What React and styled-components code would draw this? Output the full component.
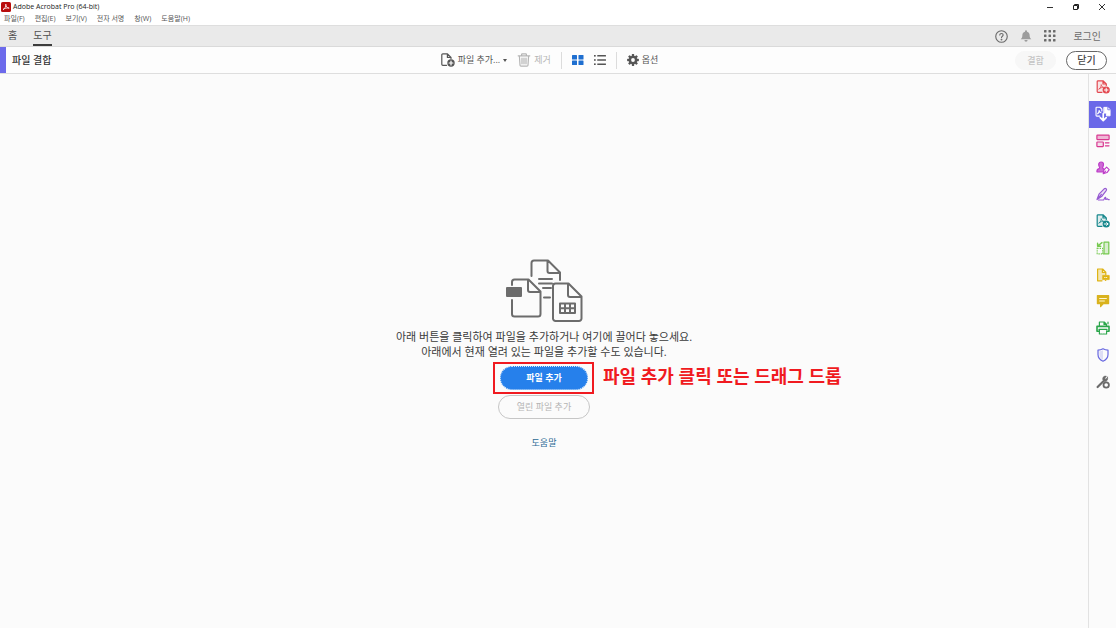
import styled, { createGlobalStyle } from "styled-components"

const GlobalStyle = createGlobalStyle`
  * {
    box-sizing: border-box;
  }
  body {
    margin: 0;
    background-color: #fbfbfb;
    color: #4b4b4b;
    font-family: "Open Sans", "Noto Sans CJK KR", sans-serif;
  }
  button {
    margin: 0;
    padding: 0;
    border: none;
    background: none;
    color: inherit;
    font-family: inherit;
    cursor: pointer;
  }
  svg {
    display: block;
    flex-shrink: 0;
  }
`

const Window = styled.div`
  display: flex;
  flex-direction: column;
  min-height: 100vh;
`

const TitleBar = styled.header`
  display: flex;
  justify-content: space-between;
  align-items: center;
  height: 13px;
  padding: 0 10px 0 1px;
  background-color: white;
`

const AppTitle = styled.div`
  display: flex;
  align-items: center;
  gap: 2px;
  font-size: 7px;
  line-height: 12px;
  color: #222;
`

const WindowControls = styled.div`
  display: flex;
  gap: 18px;
`

const MenuBar = styled.nav`
  display: flex;
  gap: 10px;
  height: 12px;
  padding-left: 4px;
  background-color: white;
`

const MenuItem = styled.button`
  font-size: 7px;
  line-height: 12px;
  color: #555;
  white-space: nowrap;
`

const TabBar = styled.div`
  display: flex;
  justify-content: space-between;
  height: 22px;
  padding: 0 15px 0 8px;
  background-color: #eaeaea;
  border-top: 1px solid #dedede;
  border-bottom: 1px solid #dadada;
`

const Tabs = styled.div`
  display: flex;
  gap: 16px;
`

const Tab = styled.button`
  height: 20px;
  font-size: 10px;
  line-height: 18px;
  color: #505050;
  border-bottom: 2px solid ${props => (props.$active ? "#3c3c3c" : "transparent")};
`

const AccountTools = styled.div`
  display: flex;
  align-items: center;
  gap: 12px;
  color: #6a6a6a;
`

const LoginButton = styled.button`
  margin-left: 5px;
  font-size: 10px;
  line-height: 20px;
`

const Toolbar = styled.div`
  display: grid;
  grid-template-columns: 1fr auto 1fr;
  align-items: center;
  height: 27px;
  padding-right: 9px;
  background-color: #fdfdfd;
  border-bottom: 1px solid #dedede;
`

const ToolName = styled.h1`
  margin: 0;
  padding-left: 6px;
  border-left: 6px solid #6c6aeb;
  font-size: 10px;
  line-height: 26px;
  font-weight: 500;
  color: #333;
`

const ToolGroup = styled.div`
  display: flex;
  align-items: center;
  gap: 10px;
  padding-right: 8px;
`

const ToolButton = styled.button`
  display: flex;
  align-items: center;
  gap: 3px;
  font-size: 9px;
  line-height: 16px;
  color: ${props => (props.$blue ? "#1f6fd0" : "#555")};
  white-space: nowrap;
  &:disabled {
    color: #b5b5b5;
  }
`

const Divider = styled.span`
  width: 1px;
  height: 17px;
  background-color: #dcdcdc;
`

const Actions = styled.div`
  display: flex;
  justify-content: flex-end;
  align-items: center;
  gap: 10px;
`

const PillButton = styled.button`
  width: 41px;
  height: 19px;
  border: 1px solid #666;
  border-radius: 10px;
  background-color: white;
  font-size: 10px;
  line-height: 17px;
  font-weight: 500;
  color: #444;
  &:disabled {
    border-color: #f7f7f7;
    background-color: #f7f7f7;
    color: #c4c4c4;
    font-size: 9px;
  }
`

const Body = styled.div`
  display: flex;
  flex: 1;
`

const DropArea = styled.main`
  display: flex;
  flex: 1;
  flex-direction: column;
  justify-content: center;
  align-items: center;
  padding-top: 7px;
`

const Message = styled.p`
  margin: 6px 0 7px;
  font-size: 11px;
  line-height: 15px;
  text-align: center;
  color: #3a3a3a;
`

const HighlightedAction = styled.div`
  position: relative;
  margin-bottom: 5px;
`

const AddButton = styled.button`
  display: block;
  width: 88px;
  height: 24px;
  border: 1px dotted #d4e6fb;
  border-radius: 12px;
  background-color: #2680eb;
  font-size: 9px;
  line-height: 22px;
  font-weight: 700;
  color: white;
`

const HighlightFrame = styled.span`
  position: absolute;
  inset: -4px -6px -4px -7px;
  border: 2px solid #f01a20;
  pointer-events: none;
`

const Annotation = styled.span`
  position: absolute;
  left: 103px;
  top: -2px;
  font-size: 18px;
  line-height: 24px;
  font-weight: 700;
  color: #f01a20;
  white-space: nowrap;
`

const OpenFilesButton = styled.button`
  width: 92px;
  height: 24px;
  border: 1px solid #c6c6c6;
  border-radius: 12px;
  font-size: 9px;
  line-height: 22px;
  color: #b4b4b4;
`

const HelpLink = styled.a`
  margin-top: 17px;
  font-size: 9px;
  line-height: 14px;
  color: #2c6a94;
  text-decoration: none;
`

const SidePanel = styled.aside`
  width: 28px;
  border-left: 1px solid #e2e2e2;
`

const ToolList = styled.div`
  display: flex;
  flex-direction: column;
  height: 321px;
`

const SideTool = styled.button`
  display: flex;
  flex: 1;
  justify-content: center;
  align-items: center;
  color: ${props => props.$color};
  background-color: ${props => (props.$active ? "#6a68e8" : "transparent")};
`

const Icon = ({ size = 14, children }) => (
  <svg
    width={size}
    height={size}
    viewBox="0 0 14 14"
    fill="none"
    stroke="currentColor"
    strokeWidth="1.2"
    strokeLinejoin="round"
    strokeLinecap="round"
    aria-hidden="true"
  >
    {children}
  </svg>
)

const AcrobatLogo = () => (
  <svg width="10" height="10" viewBox="0 0 10 10" aria-hidden="true">
    <rect width="10" height="10" rx="1.6" fill="#b90d0d" />
    <path
      d="M2 7.6C3.6 7 5.1 4.5 4.8 2.2C5 4.4 6 6 8.2 6.1C6 5.7 3.5 6.2 2 7.6Z"
      fill="none"
      stroke="white"
      strokeWidth="0.8"
      strokeLinejoin="round"
    />
  </svg>
)

const AddFileIcon = () => (
  <Icon>
    <path d="M5.6 12.3H1.8a1 1 0 0 1-1-1V1.8a1 1 0 0 1 1-1H6.5L10 4.3V5.6M6.4 1V4.4H9.8" />
    <circle cx="10" cy="10" r="3.7" fill="currentColor" stroke="none" />
    <path d="M10 8.1V11.9M8.1 10H11.9" stroke="white" />
  </Icon>
)

const TrashIcon = () => (
  <Icon>
    <path d="M1.2 2.8H12.8M4.6 2.6V1.4a.6.6 0 0 1 .6-.6H8.8a.6.6 0 0 1 .6.6V2.6M2.4 3L3 12.2a1 1 0 0 0 1 .9H10a1 1 0 0 0 1-.9L11.6 3M5 5.2V10.8M7 5.2V10.8M9 5.2V10.8" />
  </Icon>
)

const GridIcon = () => (
  <svg width="12" height="12" viewBox="0 0 12 12" fill="currentColor" aria-hidden="true">
    {[[0, 1], [6.5, 1], [0, 6.5], [6.5, 6.5]].map(([x, y]) => (
      <rect key={`${x}-${y}`} x={x} y={y} width="5" height="4.6" rx="0.5" />
    ))}
  </svg>
)

const ListIcon = () => (
  <svg width="12" height="12" viewBox="0 0 12 12" fill="currentColor" aria-hidden="true">
    {[1, 5.2, 9.4].map(y => (
      <g key={y}>
        <rect y={y} width="1.7" height="1.6" />
        <rect x="3.2" y={y} width="8.8" height="1.6" rx="0.4" />
      </g>
    ))}
  </svg>
)

const GearIcon = () => (
  <svg width="12" height="12" viewBox="0 0 12 12" aria-hidden="true">
    <g fill="currentColor">
      {[0, 45, 90, 135].map(angle => (
        <rect key={angle} x="4.8" y="0.1" width="2.4" height="11.8" rx="0.6" transform={`rotate(${angle} 6 6)`} />
      ))}
      <circle cx="6" cy="6" r="4.3" />
    </g>
    <circle cx="6" cy="6" r="1.9" fill="#fdfdfd" />
  </svg>
)

const HelpIcon = () => (
  <Icon size={13}>
    <circle cx="7" cy="7" r="6.2" />
    <path d="M5.1 5.4C5.2 3.3 8.8 3.3 8.8 5.4C8.8 6.7 7 6.7 7 8.2" />
    <circle cx="7" cy="10.3" r="0.4" fill="currentColor" />
  </Icon>
)

const BellIcon = () => (
  <svg width="12" height="12" viewBox="0 0 12 12" fill="#9c9c9c" aria-hidden="true">
    <path d="M6 0.3a1 1 0 0 1 1 1V1.7C8.8 2.1 9.6 3.4 9.6 5C9.6 7.4 10.4 8.2 11.3 9.3H0.7C1.6 8.2 2.4 7.4 2.4 5C2.4 3.4 3.2 2.1 5 1.7V1.3a1 1 0 0 1 1-1ZM4.4 10.1H7.6a1.6 1.6 0 0 1-3.2 0Z" />
  </svg>
)

const AppsIcon = () => (
  <svg width="12" height="12" viewBox="0 0 12 12" fill="currentColor" aria-hidden="true">
    {[0, 4.5, 9].map(y => [0, 4.5, 9].map(x => (
      <rect key={`${x}-${y}`} x={x} y={y} width="2.5" height="2.5" rx="0.5" />
    )))}
  </svg>
)

const PdfBadgeIcon = ({ arrow }) => (
  <Icon>
    <path
      d="M6 12.3H2a.8.8 0 0 1-.8-.8V1.6a.8.8 0 0 1 .8-.8H7L10.3 4V5.4M7 1V4H10"
      fill="currentColor"
      fillOpacity="0.12"
    />
    <path d="M3 9C4.6 8 5.4 6.2 5.2 4.6C5.5 6.4 6.4 7.2 7.8 7.4C6 7.3 4.4 7.8 3 9Z" strokeWidth="0.8" />
    <circle cx="10.2" cy="10" r="3.6" fill="currentColor" stroke="none" />
    <path d={arrow ? "M8.3 10H12M10.6 8.6L12 10L10.6 11.4" : "M10.2 8.2V11.8M8.4 10H12"} stroke="white" strokeWidth="1" />
  </Icon>
)

const CombineIcon = () => (
  <Icon size={16}>
    <path d="M4.2 8.8H1.5a.6.6 0 0 1-.6-.6V1.7a.6.6 0 0 1 .6-.6H4.4L6 2.8V4.4M2.3 6.8C3.2 6.1 3.7 5 3.6 3.9C3.8 5 4.2 5.6 5.2 5.9" strokeWidth="1" />
    <path d="M8 1.2H11.2L13.2 3.2V8.6H10V6.2H8Z" fill="currentColor" strokeWidth="0.8" />
    <path d="M11.2 1.2V3.3H13.2" stroke="#6a68e8" strokeWidth="0.7" />
    <path d="M7.2 6.6V12.4M4.6 10.2L7.2 12.8L9.8 10.2" strokeWidth="1.5" />
  </Icon>
)

const OrganizeIcon = () => (
  <Icon>
    <rect x="0.9" y="1.2" width="12.2" height="4.4" rx="0.5" fill="currentColor" fillOpacity="0.35" />
    <rect x="0.9" y="8" width="6.4" height="4.6" rx="0.5" fill="currentColor" fillOpacity="0.15" />
    <path d="M9.4 8.8H13M9.4 11.8H13" />
  </Icon>
)

const RequestSignIcon = () => (
  <Icon>
    <path
      d="M5 1C7 1 7.7 2.4 7.4 4.2C7.2 5.6 6.5 6 6.6 7C6.8 7.6 8 7.9 8.4 8.4L7 11H1C0.6 8.8 1.4 8 3 7.6C4 7.2 3.7 6.4 3.1 5.3C2.3 3.4 2.7 1 5 1Z"
      fill="currentColor"
      fillOpacity="0.75"
    />
    <path d="M7.2 12.8L8 8.8L10.6 6.2L13.2 8.6L11 11.6ZM7.4 12.6L9.8 10" fill="white" strokeWidth="1.1" />
  </Icon>
)

const SignIcon = () => (
  <Icon>
    <path d="M1 12.5L3 7.2L8.2 1.8C9.6 0.6 11.2 2.2 10.2 3.6L5.6 9.6L1 12.5ZM1.2 12.3L5.4 7.4" fill="currentColor" fillOpacity="0.15" />
    <path d="M2.5 13H7.6C8.4 12 8.8 10 9.6 10.4C10.2 10.8 9 12.8 10.2 12.4C11 12 11.2 11.6 11.6 12C11.8 12.6 12.4 12.8 13.2 12.6" />
  </Icon>
)

const ScanIcon = () => (
  <Icon>
    <path d="M8 1.2H12.8V12.8H8Z" fill="currentColor" fillOpacity="0.25" />
    <path d="M1.2 6.8V12.8H8" strokeDasharray="1.4 1" strokeLinecap="butt" />
    <path d="M1.2 7.4H6.6V12.8" strokeDasharray="1.4 1" strokeLinecap="butt" />
    <path d="M6 1.6L2 4.8M1.6 2.2V5.2H4.8" strokeWidth="1.4" />
  </Icon>
)

const FileCommentIcon = () => (
  <Icon>
    <path d="M6 12.8H1.6V1H6.6L9.8 4.2V7M6.4 1.2V4.4H9.6" fill="currentColor" fillOpacity="0.3" />
    <path d="M7 7.4H13.2V11.6H10.6L9.4 13V11.6H7Z" fill="currentColor" strokeWidth="0.8" />
    <path d="M8.6 9.5H11.8" stroke="white" strokeWidth="0.8" strokeDasharray="0.5 1.2" />
  </Icon>
)

const CommentIcon = () => (
  <Icon>
    <path d="M1.4 1.6H12.6V9.6H7.4L4.6 12.6V9.6H1.4Z" fill="currentColor" />
    <path d="M3.6 4.5H10.4M3.6 7H8.4" stroke="#fff7cf" strokeWidth="1" />
  </Icon>
)

const PrintIcon = () => (
  <Icon>
    <path d="M3.4 5V1H8.2L10.4 3.2V5M8 1.2V3.4H10.2" />
    <path d="M3 10.2H1V5.4H13V10.2H11" strokeWidth="1.6" />
    <path d="M3 8.4H11" />
    <path d="M3.4 8.8V13H10.6V8.8M12 1.2V2.8" strokeDasharray="1.6 1" />
  </Icon>
)

const ShieldIcon = () => (
  <Icon>
    <path d="M7 0.8C8.8 1.8 10.4 2.1 12 2.1V6.5C12 9.8 9.8 12 7 13.2C4.2 12 2 9.8 2 6.5V2.1C3.6 2.1 5.2 1.8 7 0.8Z" />
    <path d="M7 2.2C5.8 3 4.6 3.2 3.4 3.3V6.5C3.4 9 5 10.8 7 11.8Z" fill="currentColor" fillOpacity="0.2" stroke="none" />
  </Icon>
)

const WrenchIcon = () => (
  <Icon>
    <path d="M1.6 12L7.4 6.2" strokeWidth="2.2" />
    <path d="M11.6 2.2L9.8 4.2L8.8 3.2L10.4 1.2C8 0.6 6.2 2.4 6.8 4.8L8.6 6.6C10.8 6.8 12.2 4.6 11.6 2.2Z" fill="currentColor" strokeWidth="0.6" />
    <circle cx="10.2" cy="10" r="2.7" fill="white" strokeWidth="1.8" />
  </Icon>
)

const DocumentsArt = () => (
  <svg
    width="77"
    height="64"
    viewBox="0 0 77 64"
    fill="none"
    stroke="#6c6c6c"
    strokeWidth="2"
    strokeLinejoin="round"
    strokeLinecap="round"
    aria-hidden="true"
  >
    <path d="M25.5 17V4a2.5 2.5 0 0 1 2.5-2.5H42L54 13.5V21M41.5 2V12a2 2 0 0 0 2 2H53.5" />
    <path d="M33 20H46M33 24.5H46M37 29H45M38 38.5H44" />
    <path d="M6 26V23a2.5 2.5 0 0 1 2.5-2.5H22.5L34.5 32.5V55a2.5 2.5 0 0 1-2.5 2.5H8.5a2.5 2.5 0 0 1-2.5-2.5V41M22 21V31a2 2 0 0 0 2 2H34" />
    <rect x="1" y="29" width="14" height="8" fill="#6c6c6c" />
    <path d="M47 27a2.5 2.5 0 0 1 2.5-2.5H62.5L75.5 37.5V59.5a2.5 2.5 0 0 1-2.5 2.5H49.5a2.5 2.5 0 0 1-2.5-2.5ZM62 25V36a2 2 0 0 0 2 2H75" />
    <path d="M54 44.5H69V54H54ZM54 49.2H69M59 44.5V54M64 44.5V54" />
  </svg>
)

const menus = ["파일(F)", "편집(E)", "보기(V)", "전자 서명", "창(W)", "도움말(H)"]

const sideTools = [
  { label: "PDF 만들기", color: "#e34850", icon: <PdfBadgeIcon /> },
  { label: "파일 결합", color: "#ffffff", icon: <CombineIcon />, active: true },
  { label: "페이지 구성", color: "#d8368f", icon: <OrganizeIcon /> },
  { label: "서명 요청", color: "#bd3cc8", icon: <RequestSignIcon /> },
  { label: "작성 및 서명", color: "#965ad2", icon: <SignIcon /> },
  { label: "PDF 내보내기", color: "#16878c", icon: <PdfBadgeIcon arrow /> },
  { label: "스캔 및 OCR", color: "#75c94e", icon: <ScanIcon /> },
  { label: "주석용으로 보내기", color: "#dfb414", icon: <FileCommentIcon /> },
  { label: "주석", color: "#d9b21d", icon: <CommentIcon /> },
  { label: "인쇄물 제작", color: "#2ba64b", icon: <PrintIcon /> },
  { label: "보호", color: "#6767e0", icon: <ShieldIcon /> },
  { label: "도구 더 보기", color: "#6b6b6b", icon: <WrenchIcon /> },
]

const App = () => {
  return (
    <Window lang="ko">
      <GlobalStyle />
      <TitleBar>
        <AppTitle>
          <AcrobatLogo />
          Adobe Acrobat Pro (64-bit)
        </AppTitle>
        <WindowControls>
          <button aria-label="최소화">
            <svg width="8" height="8" viewBox="0 0 8 8" stroke="#333">
              <path d="M1 4.5H7" />
            </svg>
          </button>
          <button aria-label="이전 크기로">
            <svg width="8" height="8" viewBox="0 0 8 8" fill="none" stroke="#222">
              <path d="M1.5 2.5H5.5V6.5H1.5ZM2.5 2.5V1.5H6.5V5.5H5.5" />
            </svg>
          </button>
          <button aria-label="닫기">
            <svg width="8" height="8" viewBox="0 0 8 8" stroke="#333">
              <path d="M1 1L7 7M7 1L1 7" />
            </svg>
          </button>
        </WindowControls>
      </TitleBar>
      <MenuBar>
        {menus.map(menu => (
          <MenuItem key={menu}>{menu}</MenuItem>
        ))}
      </MenuBar>
      <TabBar>
        <Tabs>
          <Tab>홈</Tab>
          <Tab $active>도구</Tab>
        </Tabs>
        <AccountTools>
          <button aria-label="도움말"><HelpIcon /></button>
          <button aria-label="알림"><BellIcon /></button>
          <button aria-label="앱"><AppsIcon /></button>
          <LoginButton>로그인</LoginButton>
        </AccountTools>
      </TabBar>
      <Toolbar>
        <ToolName>파일 결합</ToolName>
        <ToolGroup>
          <ToolButton>
            <AddFileIcon />
            파일 추가...
            <svg width="4" height="3" viewBox="0 0 4 3" fill="currentColor">
              <path d="M0 0H4L2 3Z" />
            </svg>
          </ToolButton>
          <ToolButton disabled>
            <TrashIcon />
            제거
          </ToolButton>
          <Divider />
          <ToolButton $blue aria-label="축소판 보기"><GridIcon /></ToolButton>
          <ToolButton aria-label="목록 보기"><ListIcon /></ToolButton>
          <Divider />
          <ToolButton>
            <GearIcon />
            옵션
          </ToolButton>
        </ToolGroup>
        <Actions>
          <PillButton disabled>결합</PillButton>
          <PillButton>닫기</PillButton>
        </Actions>
      </Toolbar>
      <Body>
        <DropArea>
          <DocumentsArt />
          <Message>
            아래 버튼을 클릭하여 파일을 추가하거나 여기에 끌어다 놓으세요.
            <br />
            아래에서 현재 열려 있는 파일을 추가할 수도 있습니다.
          </Message>
          <HighlightedAction>
            <AddButton>파일 추가</AddButton>
            <HighlightFrame />
            <Annotation>파일 추가 클릭 또는 드래그 드롭</Annotation>
          </HighlightedAction>
          <OpenFilesButton disabled>열린 파일 추가</OpenFilesButton>
          <HelpLink href="#help">도움말</HelpLink>
        </DropArea>
        <SidePanel>
          <ToolList>
            {sideTools.map(tool => (
              <SideTool key={tool.label} $color={tool.color} $active={tool.active} aria-label={tool.label}>
                {tool.icon}
              </SideTool>
            ))}
          </ToolList>
        </SidePanel>
      </Body>
    </Window>
  )
}

export default App
